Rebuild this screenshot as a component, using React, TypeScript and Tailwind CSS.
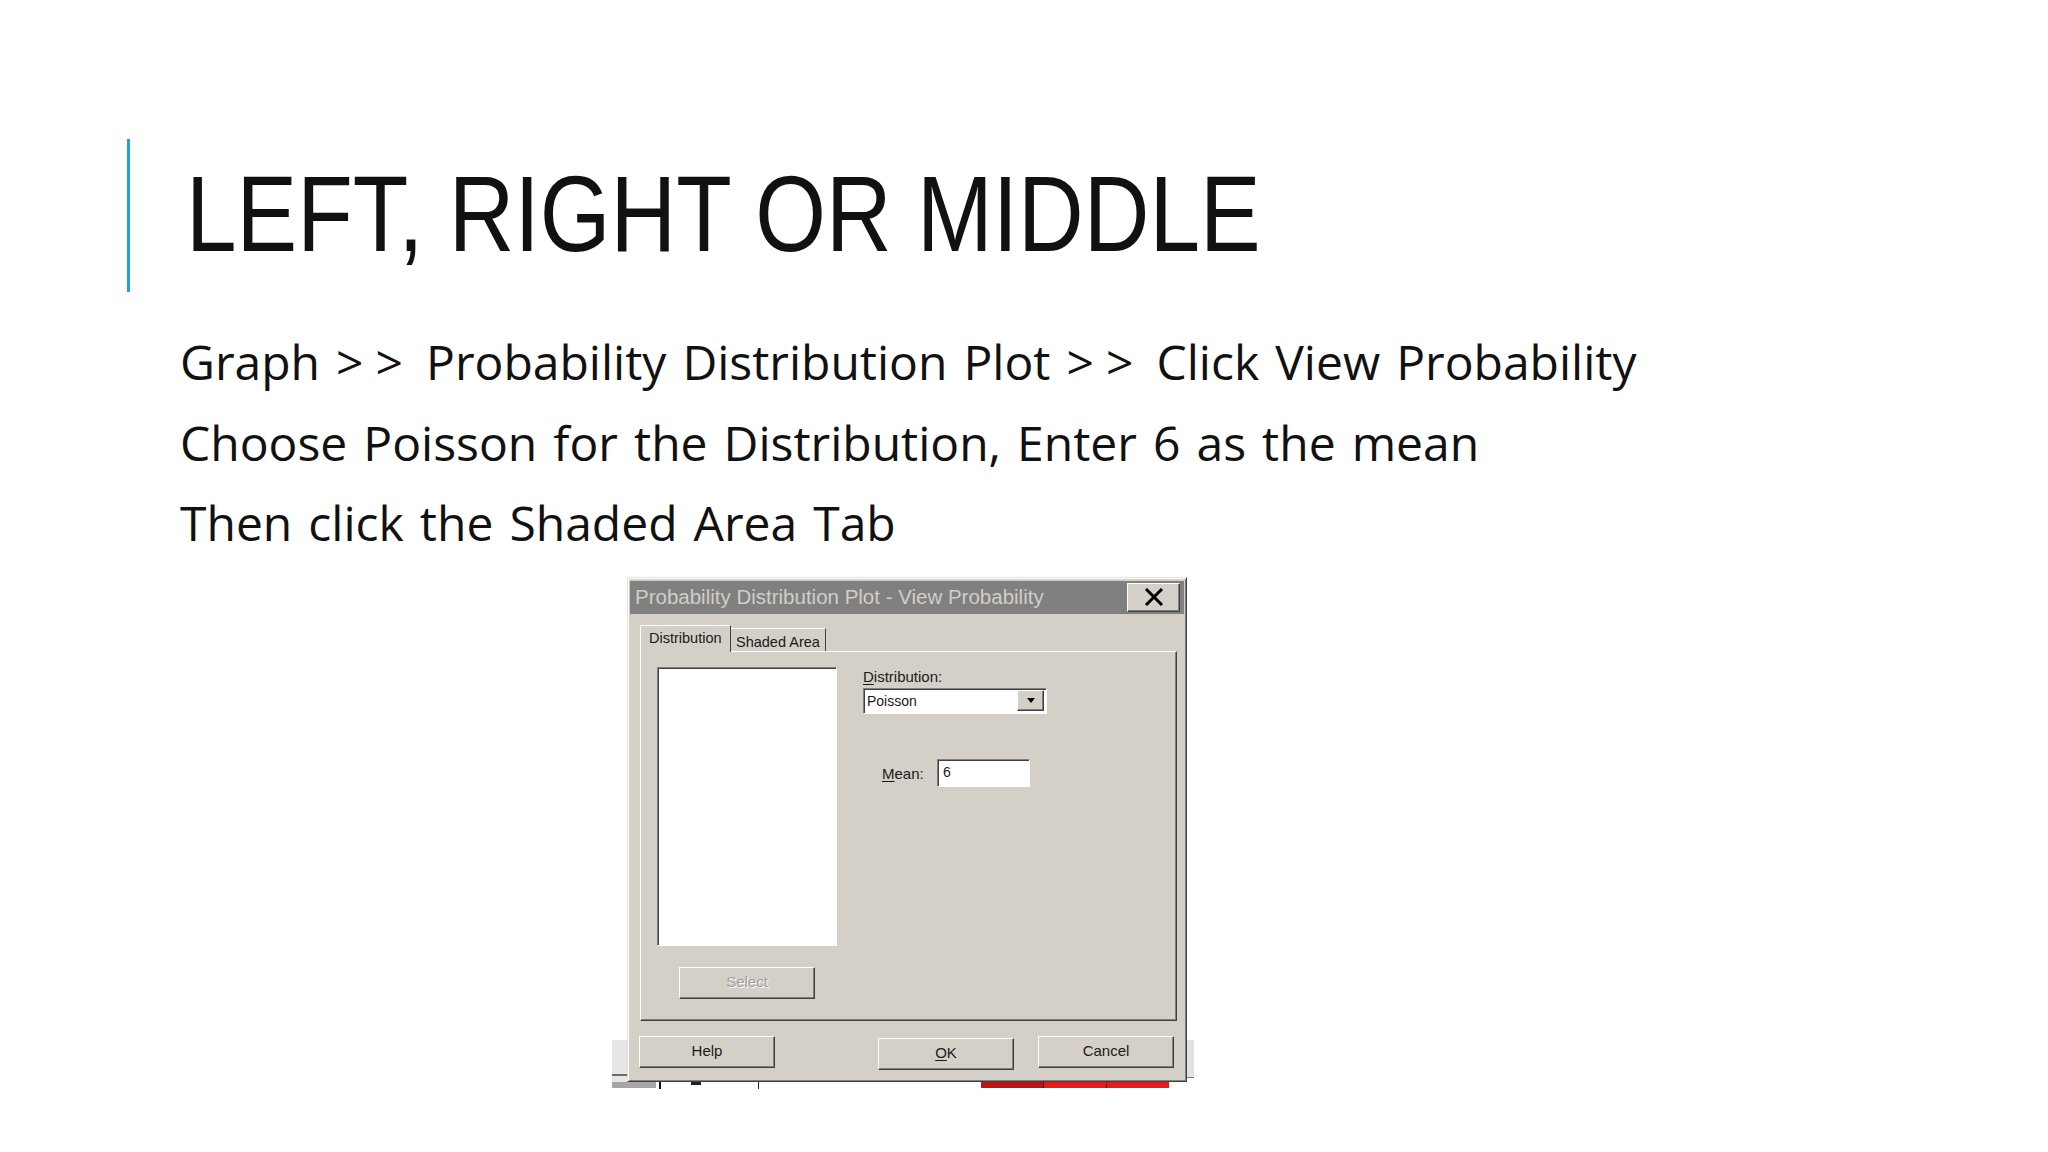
import React from "react";

const raised =
  "border border-t-white border-l-white border-r-[#404040] border-b-[#404040] shadow-[inset_-1px_-1px_#808080]";
const sunken =
  "border border-t-[#808080] border-l-[#808080] border-r-white border-b-white shadow-[inset_1px_1px_#404040]";

function WinButton({
  children,
  className = "",
  disabled = false,
}: {
  children: React.ReactNode;
  className?: string;
  disabled?: boolean;
}) {
  return (
    <div
      className={`${raised} bg-[#d4d0c8] w-[136px] h-[32px] flex items-center justify-center text-[15px] ${
        disabled ? "text-[#a19e98] [text-shadow:1px_1px_#fff]" : "text-[#1a1a1a]"
      } ${className}`}
    >
      {children}
    </div>
  );
}

// ">>" in the slide text sits a bit wider apart than the font gives
function Arrows() {
  return (
    <span>
      <span className="tracking-[12px]">&gt;</span>
      <span className="tracking-[7px]">&gt;</span>
    </span>
  );
}

function Dialog() {
  return (
    <div className="relative ml-[627px] mt-[13px] w-[560px] h-[505px]">
      {/* bits of the window behind the dialog */}
      <div className="absolute left-[-15px] top-[463px] w-[16px] h-[46px] bg-[#e6e6e6]">
        <div className="mt-[34px] h-[2px] bg-[#6a6a6a]" />
      </div>
      <div className="absolute left-[-15px] top-[505px] w-[44px] h-[6px] bg-[#a6a6a6]" />
      <div className="absolute left-[32px] top-[505px] w-[2px] h-[7px] bg-[#111]" />
      <div className="absolute left-[36px] top-[505px] w-[96px] h-[7px] bg-white border-r border-[#222]">
        <div className="ml-[28px] w-[10px] h-[3px] bg-[#222]" />
      </div>
      <div className="absolute left-[354px] top-[505px] w-[188px] h-[6px] bg-[#e21c1c] flex">
        <div className="w-[63px] h-full bg-[#b81616] border-r border-[#3a0a0a]" />
        <div className="w-[63px] h-full border-r border-[#6a1010]" />
      </div>
      <div className="absolute left-[559px] top-[463px] w-[8px] h-[38px] bg-[#e2e2e2] border-b border-[#7a7a7a]" />

      <div className="relative z-10 w-[560px] h-[505px] bg-[#d4d0c8] border border-t-[#e4e1da] border-l-[#e4e1da] border-r-[#404040] border-b-[#404040] shadow-[inset_1px_1px_#fff,inset_-1px_-1px_#808080] pt-[3px] px-[2px] flex flex-col font-['Liberation_Sans',Arial,sans-serif]">
        {/* title bar */}
        <div className="h-[33px] bg-[#808080] flex items-center justify-between pl-[5px] pr-[4px]">
          <span className="text-[20.5px] text-[#d2cec6] leading-none">
            Probability Distribution Plot - View Probability
          </span>
          <div className={`${raised} bg-[#d4d0c8] w-[53px] h-[29px] flex items-center justify-center`}>
            <svg width="20" height="18" viewBox="0 0 20 18">
              <path d="M2 1 L18 17 M18 1 L2 17" stroke="#000" strokeWidth="3" />
            </svg>
          </div>
        </div>

        {/* body */}
        <div className="pt-[11px] pl-[10px] pr-[7px] flex flex-col">
          {/* tabs */}
          <div className="flex items-end h-[26px] relative z-10">
            <div className="w-[91px] h-[27px] -mb-[1px] bg-[#d4d0c8] border-t border-l border-t-white border-l-white border-r border-r-[#404040] pl-[8px] pt-[4px] text-[14.5px] text-[#1a1a1a] leading-[16px]">
              Distribution
            </div>
            <div className="w-[95px] h-[23px] border-t border-t-white border-r border-r-[#404040] pl-[5px] pt-[5px] text-[14.5px] text-[#1a1a1a] leading-[16px]">
              Shaded Area
            </div>
          </div>

          {/* panel */}
          <div className="h-[370px] border border-t-white border-l-white border-r-[#404040] border-b-[#404040] shadow-[inset_-1px_-1px_#808080] pl-[16px] pt-[15px] flex">
            <div className="flex flex-col">
              <div className={`${sunken} w-[180px] h-[279px] bg-white`} />
              <WinButton disabled className="ml-[22px] mt-[21px] w-[135px]">
                Select
              </WinButton>
            </div>
            <div className="ml-[26px] flex flex-col text-[15px] text-[#1a1a1a]">
              <div className="mt-[1px] leading-[18px]">
                <span className="underline underline-offset-2">D</span>istribution:
              </div>
              <div className={`${sunken} mt-[2px] w-[184px] h-[26px] bg-white flex items-center justify-between pl-[3px] pr-[2px]`}>
                <span className="text-[14px] mt-[2px]">Poisson</span>
                <div className={`${raised} w-[27px] h-[21px] bg-[#d4d0c8] flex items-center justify-center`}>
                  <svg width="10" height="6" viewBox="0 0 10 6">
                    <path d="M1 0 L9 0 L5 5 Z" fill="#000" />
                  </svg>
                </div>
              </div>
              <div className="mt-[45px] ml-[19px] flex items-center">
                <span className="w-[55px] mt-[3px]">
                  <span className="underline underline-offset-2">M</span>ean:
                </span>
                <div className={`${sunken} w-[93px] h-[28px] bg-white flex items-center pl-[5px] text-[14px]`}>
                  6
                </div>
              </div>
            </div>
          </div>

          {/* buttons */}
          <div className="mt-[15px] flex items-start -ml-[1px]">
            <WinButton>Help</WinButton>
            <WinButton className="ml-[103px] mt-[2px]">
              <span className="underline underline-offset-2">O</span>K
            </WinButton>
            <WinButton className="ml-[24px]">Cancel</WinButton>
          </div>
        </div>
      </div>
    </div>
  );
}

export default function App() {
  return (
    <div className="w-[2048px] h-[1152px] bg-white overflow-hidden flex flex-col">
      <div className="flex pt-[139px] pl-[127px]">
        <div className="w-[3px] h-[153px] bg-[#1ba3dc]" />
        <h1 className="ml-[56px] mt-[22px] origin-left scale-x-[0.85] whitespace-nowrap text-[107px] leading-[107px] text-[#111] font-['Liberation_Sans_Narrow','Arial_Narrow','Liberation_Sans',sans-serif]">
          LEFT, RIGHT OR MIDDLE
        </h1>
      </div>

      <div className="mt-[30px] pl-[180px] text-[48px] leading-[80.5px] [word-spacing:3.6px] text-[#111] font-['Open_Sans',sans-serif]">
        <p>
          Graph <Arrows /> Probability Distribution Plot <Arrows /> Click View Probability
        </p>
        <p>Choose Poisson for the Distribution, Enter 6 as the mean</p>
        <p>Then click the Shaded Area Tab</p>
      </div>

      <Dialog />
    </div>
  );
}
